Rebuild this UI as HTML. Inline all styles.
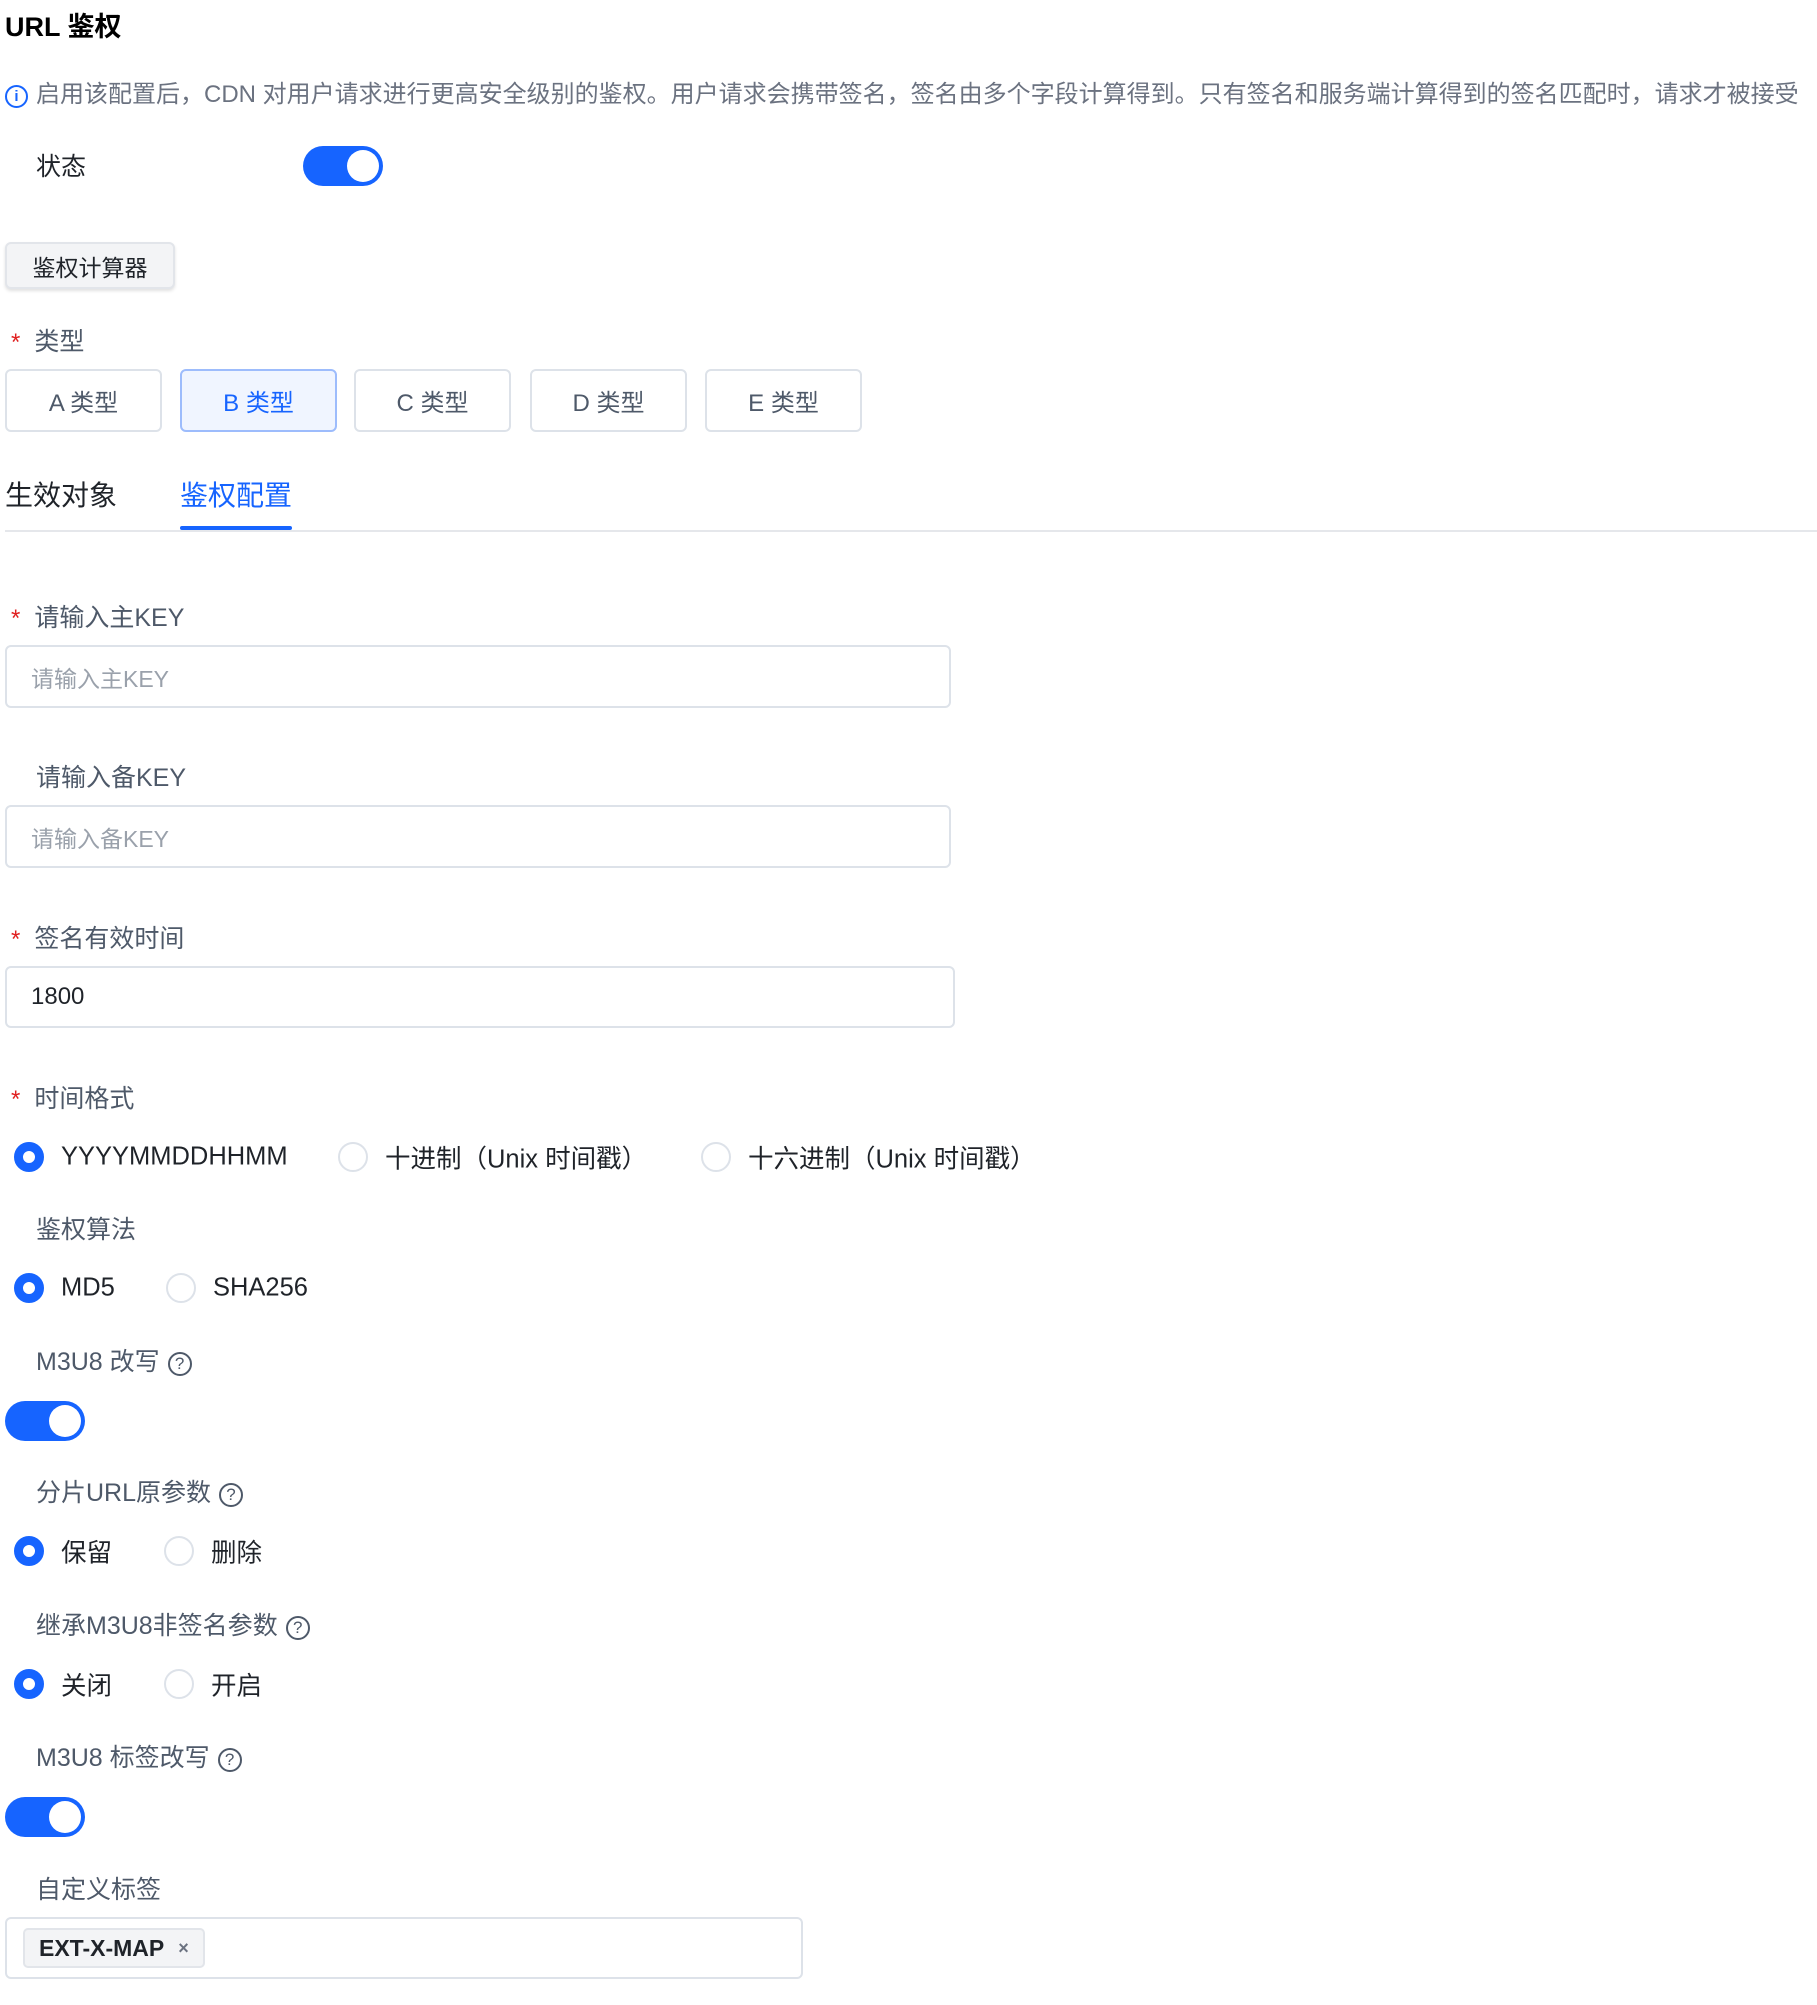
<!DOCTYPE html>
<html><head><meta charset="utf-8"><style>
*{box-sizing:border-box;margin:0;padding:0}
body{width:1817px;height:2005px;background:#fff;font-family:"Liberation Sans","Noto Sans CJK SC",sans-serif;position:relative;overflow:hidden;color:#1f2329}
.a{position:absolute;white-space:nowrap}
.lbl{font-size:25px;color:#4e5969;transform:translateY(-50%)}
.star{color:#e02020;margin-right:14px;margin-left:-25px;font-size:24px}
.tog{position:absolute;width:80px;height:40px;border-radius:20px;background:#1664ff}
.tog::after{content:"";position:absolute;right:4px;top:4px;width:32px;height:32px;border-radius:50%;background:#fff}
.inp{position:absolute;border:2px solid #dde2e9;border-radius:6px;font-size:23px;color:#9aa1ab;padding-left:24px;display:flex;align-items:center}
.tb{position:absolute;top:369px;width:157px;height:63px;border:2px solid #dde2e9;border-radius:6px;font-size:24px;color:#4e5969;display:flex;align-items:center;justify-content:center}
.rad{position:absolute;width:30px;height:30px;border-radius:50%;border:2px solid #dde2e9;transform:translate(-50%,-50%)}
.rad.on{border:9px solid #1664ff}
.rt{font-size:25.5px;color:#1f2329;transform:translateY(-50%)}
.q{display:inline-block;width:24px;height:24px;border:2px solid #4e5969;border-radius:50%;font-size:17px;line-height:20px;text-align:center;vertical-align:1px;margin-left:8px}
</style></head><body>
<div class="a" style="left:5px;top:5px;font-size:27px;color:#000;font-weight:bold">URL 鉴权</div>
<div class="a" style="left:5px;top:74px;font-size:24px;color:#6b7280"><span style="display:inline-block;width:23px;height:23px;border:2px solid #1664ff;border-radius:50%;color:#1664ff;font-size:15px;line-height:19px;text-align:center;font-weight:bold;vertical-align:1px;margin-right:8px">i</span>启用该配置后，CDN 对用户请求进行更高安全级别的鉴权。用户请求会携带签名，签名由多个字段计算得到。只有签名和服务端计算得到的签名匹配时，请求才被接受</div>
<div class="a lbl" style="left:36px;top:165px;color:#1f2329">状态</div>
<div class="tog" style="left:303px;top:146px"></div>
<div class="a" style="left:5px;top:242px;width:170px;height:47px;background:#f3f4f6;border:2px solid #e2e5ea;border-radius:6px;box-shadow:0 2px 3px rgba(0,0,0,.12);font-size:23px;color:#1f2329;display:flex;align-items:center;justify-content:center">鉴权计算器</div>
<div class="a lbl" style="left:36px;top:340px"><span class="star">*</span>类型</div>
<div class="tb" style="left:5px">A 类型</div>
<div class="tb" style="left:180px;background:#f0f5ff;border-color:#9dbcfc;color:#1664ff">B 类型</div>
<div class="tb" style="left:354px">C 类型</div>
<div class="tb" style="left:530px">D 类型</div>
<div class="tb" style="left:705px">E 类型</div>
<div class="a" style="left:5px;top:474px;font-size:28px;color:#1f2329">生效对象</div>
<div class="a" style="left:180px;top:474px;font-size:28px;color:#1664ff">鉴权配置</div>
<div class="a" style="left:5px;top:530px;width:1812px;height:2px;background:#e5e7eb"></div>
<div class="a" style="left:180px;top:526px;width:112px;height:4px;background:#1664ff;border-radius:2px"></div>
<div class="a lbl" style="left:36px;top:616px"><span class="star">*</span>请输入主KEY</div>
<div class="inp" style="left:5px;top:645px;width:946px;height:63px">请输入主KEY</div>
<div class="a lbl" style="left:36px;top:776px">请输入备KEY</div>
<div class="inp" style="left:5px;top:805px;width:946px;height:63px">请输入备KEY</div>
<div class="a lbl" style="left:36px;top:937px"><span class="star">*</span>签名有效时间</div>
<div class="inp" style="left:5px;top:966px;width:950px;height:62px;color:#1f2329;font-size:24px">1800</div>
<div class="a lbl" style="left:36px;top:1097px"><span class="star">*</span>时间格式</div>
<div class="rad on" style="left:29px;top:1157px"></div><div class="a rt" style="left:61px;top:1157px">YYYYMMDDHHMM</div>
<div class="rad" style="left:353px;top:1157px"></div><div class="a rt" style="left:385px;top:1157px">十进制（Unix 时间戳）</div>
<div class="rad" style="left:716px;top:1157px"></div><div class="a rt" style="left:748px;top:1157px">十六进制（Unix 时间戳）</div>
<div class="a lbl" style="left:36px;top:1228px">鉴权算法</div>
<div class="rad on" style="left:29px;top:1288px"></div><div class="a rt" style="left:61px;top:1288px">MD5</div>
<div class="rad" style="left:181px;top:1288px"></div><div class="a rt" style="left:213px;top:1288px">SHA256</div>
<div class="a lbl" style="left:36px;top:1360px">M3U8 改写<span class="q">?</span></div>
<div class="tog" style="left:5px;top:1401px"></div>
<div class="a lbl" style="left:36px;top:1491px">分片URL原参数<span class="q">?</span></div>
<div class="rad on" style="left:29px;top:1551px"></div><div class="a rt" style="left:61px;top:1551px">保留</div>
<div class="rad" style="left:179px;top:1551px"></div><div class="a rt" style="left:211px;top:1551px">删除</div>
<div class="a lbl" style="left:36px;top:1624px">继承M3U8非签名参数<span class="q">?</span></div>
<div class="rad on" style="left:29px;top:1684px"></div><div class="a rt" style="left:61px;top:1684px">关闭</div>
<div class="rad" style="left:179px;top:1684px"></div><div class="a rt" style="left:211px;top:1684px">开启</div>
<div class="a lbl" style="left:36px;top:1756px">M3U8 标签改写<span class="q">?</span></div>
<div class="tog" style="left:5px;top:1797px"></div>
<div class="a lbl" style="left:36px;top:1888px">自定义标签</div>
<div class="inp" style="left:5px;top:1917px;width:798px;height:62px;padding-left:16px">
<div style="height:40px;padding:0 14px;background:#f3f4f6;border:2px solid #e2e5ea;border-radius:5px;font-size:23px;color:#1f2329;display:flex;align-items:center;font-weight:bold">EXT-X-MAP<span style="margin-left:14px;font-size:18px;color:#6b7280;font-weight:bold">×</span></div>
</div>
</body></html>
